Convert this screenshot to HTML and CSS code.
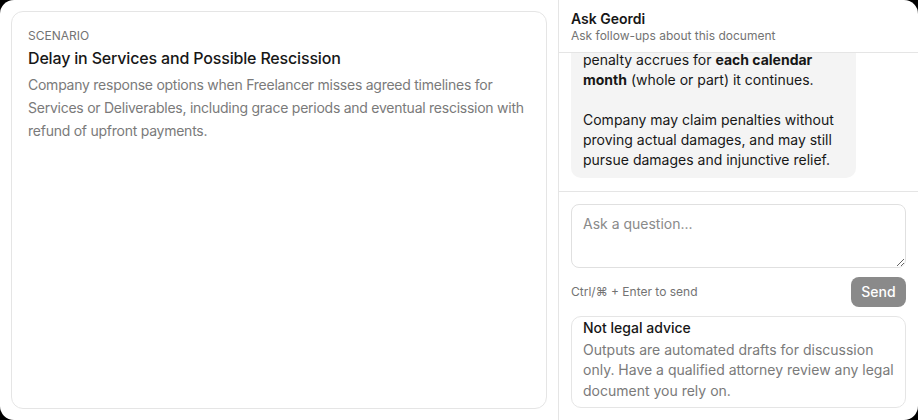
FILE: index.html
```html
<!DOCTYPE html>
<html lang="en">
<head>
    <meta charset="UTF-8">
    <meta name="viewport" content="width=device-width, initial-scale=1.0">
    <title>Scenario - Ask Geordi</title>
    <link rel="stylesheet" href="styles.css">
</head>
<body>
    <div class="window">
        <div class="left-pane">
            <div class="scenario-card">
                <div class="eyebrow">Scenario</div>
                <h1 class="scenario-title">Delay in Services and Possible Rescission</h1>
                <p class="scenario-desc">Company response options when Freelancer misses agreed timelines for Services or Deliverables, including grace periods and eventual rescission with refund of upfront payments.</p>
            </div>
        </div>

        <div class="chat-pane">
            <div class="chat-header">
                <div class="chat-title">Ask Geordi</div>
                <div class="chat-sub">Ask follow-ups about this document</div>
            </div>

            <div class="chat-messages">
                <div class="bubble">
                    <p>If the delay is not cured within the agreed grace period, a late<br>penalty accrues for <strong>each calendar month</strong> (whole or part) it continues.</p>
                    <p>Company may claim penalties without proving actual damages, and may still pursue damages and injunctive relief.</p>
                </div>
            </div>

            <div class="chat-compose">
                <textarea class="question" placeholder="Ask a question..."></textarea>
                <div class="compose-row">
                    <span class="hint">Ctrl/⌘ + Enter to send</span>
                    <button class="send-button" disabled>Send</button>
                </div>
                <div class="disclaimer">
                    <div class="disclaimer-title">Not legal advice</div>
                    <p>Outputs are automated drafts for discussion only. Have a qualified attorney review any legal document you rely on.</p>
                </div>
            </div>
        </div>
    </div>
</body>
</html>
```

FILE: styles.css
```css
html, body {
    margin: 0;
    padding: 0;
    background-color: #000;
}
body {
    font-family: Inter, "Noto Sans", "DejaVu Sans", sans-serif;
    color: #171717;
}
.window {
    width: 918px;
    height: 420px;
    background-color: #fff;
    border-radius: 14px;
    overflow: hidden;
    display: grid;
    grid-template-columns: 558px 1fr;
}

/* left side */
.left-pane {
    padding: 11px;
    display: flex;
}
.scenario-card {
    flex: 1;
    border: 1px solid #e5e5e5;
    border-radius: 12px;
    padding: 16px;
}
.eyebrow {
    font-size: 12px;
    line-height: 16px;
    text-transform: uppercase;
    color: #737373;
}
.scenario-title {
    margin: 2px 0 0;
    font-size: 16px;
    line-height: 24px;
    font-weight: 500;
    letter-spacing: -0.17px;
    color: #171717;
}
.scenario-desc {
    margin: 3px 0 0;
    font-size: 14px;
    line-height: 23px;
    letter-spacing: -0.25px;
    color: #7a7a7a;
}

/* right side */
.chat-pane {
    border-left: 1px solid #e5e5e5;
    display: flex;
    flex-direction: column;
    min-height: 0;
}
.chat-header {
    padding: 10px 12px 8px;
    border-bottom: 1px solid #e5e5e5;
}
.chat-title {
    font-size: 14px;
    line-height: 18px;
    font-weight: 600;
}
.chat-sub {
    font-size: 12px;
    line-height: 16px;
    color: #737373;
}
.chat-messages {
    height: 138px;
    overflow: hidden;
    display: flex;
    flex-direction: column;
    justify-content: flex-end;
    padding: 0 12px 13px;
    border-bottom: 1px solid #e5e5e5;
}
.bubble {
    width: 261px;
    background-color: #f4f4f4;
    border-radius: 10px;
    padding: 8px 12px;
    font-size: 14px;
    line-height: 20px;
    color: #171717;
}
.bubble p {
    margin: 0 0 20px;
}
.bubble p:last-child {
    margin-bottom: 0;
}
.bubble strong {
    font-weight: 700;
}
.chat-compose {
    padding: 12px;
}
.question {
    display: block;
    box-sizing: border-box;
    width: 335px;
    height: 64px;
    border: 1px solid #e0e0e0;
    border-radius: 8px;
    padding: 10px 11px;
    font-family: inherit;
    font-size: 14px;
    line-height: 18px;
    resize: vertical;
}
.question::placeholder {
    color: #8a8a8a;
}
.compose-row {
    display: flex;
    align-items: center;
    justify-content: space-between;
    margin-top: 9px;
}
.hint {
    font-size: 12px;
    color: #737373;
}
.send-button {
    width: 55px;
    height: 30px;
    border: none;
    border-radius: 8px;
    background-color: #8a8a8a;
    color: #fff;
    font-family: inherit;
    font-size: 14px;
    font-weight: 500;
}
.disclaimer {
    margin-top: 9px;
    border: 1px solid #e5e5e5;
    border-radius: 10px;
    padding: 1px 11px 6px;
    width: 311px;
}
.disclaimer-title {
    font-size: 14px;
    line-height: 20px;
    font-weight: 500;
}
.disclaimer p {
    margin: 2px 0 0;
    font-size: 14px;
    line-height: 20.5px;
    color: #7a7a7a;
}
```
